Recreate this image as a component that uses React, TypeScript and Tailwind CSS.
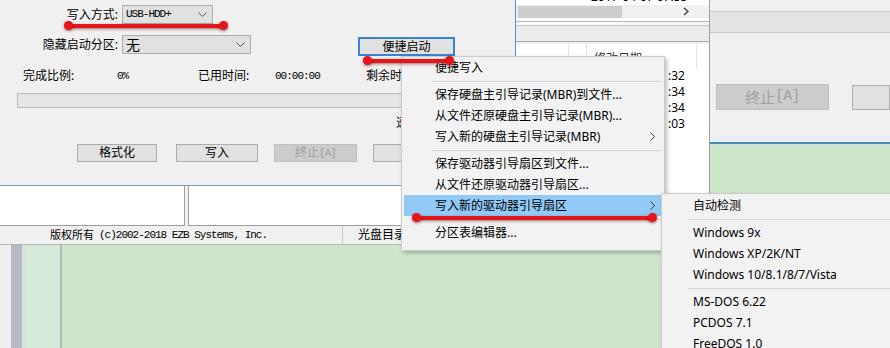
import React from "react";

const mono = "font-['Liberation_Mono','Noto_Sans_CJK_SC',monospace] text-[11px] tracking-[-1px]";

function Chevron() {
  return (
    <svg width="9" height="5" viewBox="0 0 9 5" className="shrink-0">
      <path d="M0.5 0.5L4.5 4.5L8.5 0.5" stroke="#555" strokeWidth="1" fill="none" />
    </svg>
  );
}

function Arrow() {
  return (
    <svg width="5" height="9" viewBox="0 0 5 9" className="shrink-0">
      <path d="M0.5 0.5L4.5 4.5L0.5 8.5" stroke="#333" strokeWidth="1" fill="none" />
    </svg>
  );
}

function DialogA() {
  return (
    <div className="w-[515px] h-[245px] shrink-0 bg-[#f0f0f0] flex flex-col text-[12px] text-black">
      <div className="flex items-center mt-[5px] h-[19px]">
        <div className="w-[118px] text-right leading-[19px]">写入方式:</div>
        <div className="ml-[4px] w-[91px] h-[19px] border border-[#adadad] bg-[#e1e1e1] flex items-center justify-between pl-[3px] pr-[5px]">
          <span className={mono}>USB-HDD+</span>
          <Chevron />
        </div>
      </div>
      <div className="flex items-start mt-[11px] h-[21px]">
        <div className="w-[118px] text-right leading-[19px] h-[19px]">隐藏启动分区:</div>
        <div className="ml-[4px] w-[129px] h-[19px] border border-[#adadad] bg-[#e1e1e1] flex items-center justify-between pl-[3px] pr-[5px]">
          <span className="text-[14px] leading-[17px]">无</span>
          <Chevron />
        </div>
        <div className="ml-[107px] mt-[2px] w-[97px] h-[19px] border-2 border-[#3a84cf] bg-[#e1e1e1] flex items-center justify-center leading-[15px]">
          便捷启动
        </div>
      </div>
      <div className="flex items-center mt-[12px] h-[16px] pl-[23px] leading-[16px]">
        <span className="w-[94px] shrink-0">完成比例:</span>
        <span className={`w-[81px] shrink-0 ${mono}`}>0%</span>
        <span className="w-[77px] shrink-0">已用时间:</span>
        <span className={`w-[91px] shrink-0 ${mono}`}>00:00:00</span>
        <span className="shrink-0">剩余时间:</span>
      </div>
      <div className="mt-[9px] ml-[17px] w-[392px] h-[15px] bg-[#e6e6e6] border border-[#bcbcbc]" />
      <div className="mt-[8px] h-[14px] pl-[396px] leading-[14px]">速度:</div>
      <div className="mt-[14px] h-[18px] flex pl-[77px]">
        <div className="w-[80px] h-[18px] border border-[#adadad] bg-[#e1e1e1] flex items-center justify-center leading-[16px]">格式化</div>
        <div className="ml-[19px] w-[82px] h-[18px] border border-[#adadad] bg-[#e1e1e1] flex items-center justify-center leading-[16px]">写入</div>
        <div className="ml-[16px] w-[83px] h-[18px] border border-[#bfbfbf] bg-[#cccccc] flex items-center justify-center leading-[16px] text-[#a0a0a0]">
          <span>终止</span>
          <span className={mono}>[A]</span>
        </div>
        <div className="ml-[16px] w-[83px] h-[18px] border border-[#adadad] bg-[#e1e1e1]" />
      </div>
      <div className="mt-[23px] h-px bg-[#7f9db9]" />
      <div className="flex h-[40px]">
        <div className="w-[185px] bg-white border-r border-b border-[#a0a0a0]" />
        <div className="w-[3px]" />
        <div className="flex-1 bg-white border-l border-b border-[#a0a0a0]" />
      </div>
      <div className="h-[19px] flex items-center border-b border-[#b5b5b5]">
        <div className="w-[343px] pl-[50px] h-full flex items-center border-r border-[#c8c8c8] whitespace-nowrap">
          <span className="text-[11px]">版权所有</span>
          <span className={`${mono} ml-[5px]`}>(c)2002-2018 EZB Systems, Inc.</span>
        </div>
        <div className="pl-[15px] text-[12px] whitespace-nowrap">光盘目录</div>
      </div>
    </div>
  );
}

function WinB() {
  const times = [":32", ":34", ":34", ":03"];
  return (
    <div className="w-[195px] h-[245px] shrink-0 bg-white border-l border-l-[#5f8fc6] border-r border-r-[#a0a0a0] flex flex-col text-[12px] text-black">
      <div className="h-[5px] overflow-hidden">
        <div className="-mt-[10px] pl-[75px] leading-[14px] whitespace-nowrap">2017-04-07 07:55</div>
      </div>
      <div className="h-[13px] bg-[#f0f0f0] flex items-center justify-between pr-[20px]">
        <div className="ml-[2px] w-[104px] h-[12px] bg-[#cdcdcd]" />
        <svg width="6" height="9" viewBox="0 0 6 9">
          <path d="M1 1L5 4.5L1 8" stroke="#444" strokeWidth="1.5" fill="none" />
        </svg>
      </div>
      <div className="h-[3px] bg-white" />
      <div className="h-px bg-[#b8b8b8]" />
      <div className="h-[3px] bg-[#f7f7f7]" />
      <div className="h-px bg-[#c4c4c4]" />
      <div className="h-[15px] bg-[#ececec]" />
      <div className="h-px bg-[#a8a8a8]" />
      <div className="h-[2px] bg-[#f0f0f0]" />
      <div className="h-[24px] flex">
        <div className="w-[53px] border-r border-[#e5e5e5]" />
        <div className="w-[18px] border-r border-[#e5e5e5]" />
        <div className="w-[110px] border-r border-[#e5e5e5] pl-[7px] pt-[8px] leading-[14px] text-[#333] overflow-hidden">修改日期</div>
      </div>
      {times.map((t, i) => (
        <div key={i} className="h-[16px] pl-[152px] leading-[16px] whitespace-nowrap">
          {t}
        </div>
      ))}
    </div>
  );
}

function WinC() {
  return (
    <div className="w-[180px] h-[145px] shrink-0 bg-[#f0f0f0] flex flex-col">
      <div className="h-[11px]" />
      <div className="h-px bg-[#c8c8c8]" />
      <div className="h-[20px] bg-[#e3e3e3]" />
      <div className="h-px bg-[#c8c8c8]" />
      <div className="mt-[51px] flex items-start h-[26px]">
        <div className="ml-[6px] w-[118px] h-[26px] border border-[#bfbfbf] bg-[#cccccc] flex items-center justify-center text-[#a0a0a0] text-[15px]">
          <span>终止</span>
          <span className="font-['Liberation_Mono',monospace] text-[15px] tracking-[-1px]">[A]</span>
        </div>
        <div className="ml-[23px] mt-[1px] w-[40px] h-[25px] border border-[#adadad] bg-[#e1e1e1]" />
      </div>
      <div className="mt-[25px] h-[7px] bg-[#e8f0f6]" />
      <div className="h-[2px] bg-[#4d86b8]" />
      <div className="h-px bg-[#cfe3ef]" />
    </div>
  );
}

function Item({ label, arrow, active }: { label: string; arrow?: boolean; active?: boolean }) {
  return (
    <div
      className={`h-[21px] flex items-center justify-between pl-[31px] pr-[7px] whitespace-nowrap ${
        active ? "bg-[#91c9f7]" : ""
      }`}
    >
      <span className="leading-[21px]">{label}</span>
      {arrow ? <Arrow /> : null}
    </div>
  );
}

function Sep({ ml }: { ml: string }) {
  return (
    <div className={`h-[6px] flex items-center ${ml}`}>
      <div className="h-px w-full bg-[#d5d5d5]" />
    </div>
  );
}

function SubItem({ label }: { label: string }) {
  return (
    <div className="h-[21px] flex items-center pl-[29px] whitespace-nowrap">
      <span className="leading-[21px]">{label}</span>
    </div>
  );
}

export default function App() {
  return (
    <div className="relative w-[890px] h-[348px] overflow-hidden bg-[#cee7ca] flex flex-col font-['Noto_Sans','Noto_Sans_CJK_SC',sans-serif]">
      <div className="flex items-start h-[245px] shrink-0">
        <DialogA />
        <WinB />
        <WinC />
      </div>
      <div className="flex flex-1">
        <div className="w-[11px] bg-[#eeeeee]" />
        <div className="w-[11px] bg-[#b9b9c5]" />
        <div className="w-[3px] bg-[#d9e2dc]" />
        <div className="w-[35px] bg-[#d6eadb]" />
        <div className="w-[2px] bg-[#aebfae]" />
      </div>

      {/* red mark 1 */}
      <div className="absolute left-[68px] top-[24px] w-[155px] h-[4px] bg-[#e3161c] shadow-[0_1px_3px_rgba(90,0,0,0.55)]" />
      <div className="absolute left-[64px] top-[21px] w-[9px] h-[9px] rounded-full bg-[#e3161c] shadow-[0_1px_3px_rgba(90,0,0,0.55)]" />
      <div className="absolute left-[219px] top-[21px] w-[9px] h-[9px] rounded-full bg-[#e3161c] shadow-[0_1px_3px_rgba(90,0,0,0.55)]" />

      {/* context menu */}
      <div className="absolute left-[401px] top-[56px] w-[264px] h-[195px] bg-[#f2f2f2] border border-[#cccccc] shadow-[2px_2px_4px_rgba(0,0,0,0.25)] px-[2px] flex flex-col text-[12px] text-black">
        <Item label="便捷写入" />
        <Sep ml="pl-[28px]" />
        <Item label="保存硬盘主引导记录(MBR)到文件..." />
        <Item label="从文件还原硬盘主引导记录(MBR)..." />
        <Item label="写入新的硬盘主引导记录(MBR)" arrow />
        <Sep ml="pl-[28px]" />
        <Item label="保存驱动器引导扇区到文件..." />
        <Item label="从文件还原驱动器引导扇区..." />
        <Item label="写入新的驱动器引导扇区" arrow active />
        <Sep ml="pl-[28px]" />
        <Item label="分区表编辑器..." />
      </div>

      {/* submenu */}
      <div className="absolute left-[661px] top-[193px] w-[240px] h-[170px] bg-[#f2f2f2] border border-[#cccccc] shadow-[2px_2px_4px_rgba(0,0,0,0.25)] pt-[1px] px-[2px] flex flex-col text-[12px] text-black">
        <SubItem label="自动检测" />
        <Sep ml="pl-[24px]" />
        <SubItem label="Windows 9x" />
        <SubItem label="Windows XP/2K/NT" />
        <SubItem label="Windows 10/8.1/8/7/Vista" />
        <Sep ml="pl-[24px]" />
        <SubItem label="MS-DOS 6.22" />
        <SubItem label="PCDOS 7.1" />
        <SubItem label="FreeDOS 1.0" />
      </div>

      {/* red mark 2 */}
      <div className="absolute left-[367px] top-[59px] w-[83px] h-[4px] bg-[#e3161c] shadow-[0_1px_3px_rgba(90,0,0,0.55)]" />
      <div className="absolute left-[363px] top-[56px] w-[9px] h-[9px] rounded-full bg-[#e3161c] shadow-[0_1px_3px_rgba(90,0,0,0.55)]" />
      <div className="absolute left-[445px] top-[56px] w-[9px] h-[9px] rounded-full bg-[#e3161c] shadow-[0_1px_3px_rgba(90,0,0,0.55)]" />

      {/* red mark 3 */}
      <div className="absolute left-[417px] top-[216px] w-[236px] h-[4px] bg-[#e3161c] shadow-[0_1px_3px_rgba(90,0,0,0.55)]" />
      <div className="absolute left-[412px] top-[213px] w-[9px] h-[9px] rounded-full bg-[#e3161c] shadow-[0_1px_3px_rgba(90,0,0,0.55)]" />
      <div className="absolute left-[648px] top-[213px] w-[9px] h-[9px] rounded-full bg-[#e3161c] shadow-[0_1px_3px_rgba(90,0,0,0.55)]" />
    </div>
  );
}
